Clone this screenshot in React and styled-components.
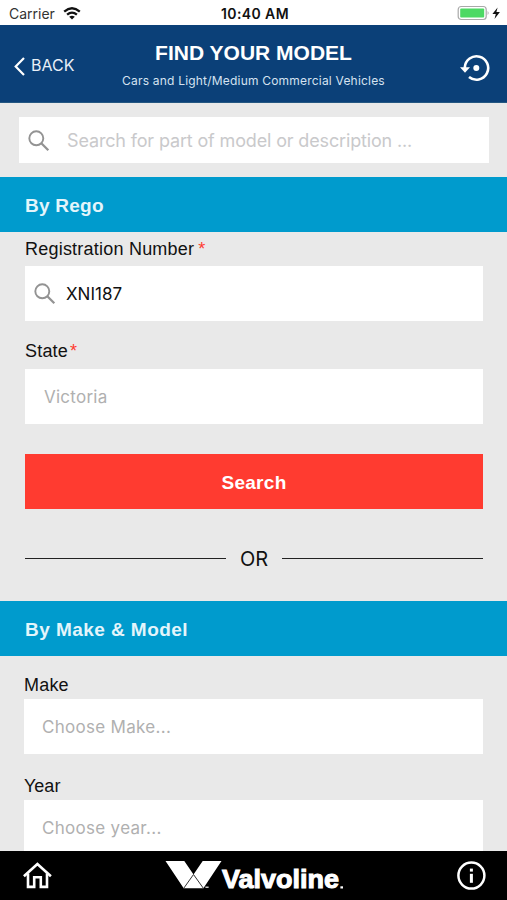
import React from "react";
import styled, { createGlobalStyle } from "styled-components";

const Global = createGlobalStyle`
  * { box-sizing: border-box; }
  body { margin: 0; background: #e9e9e9; }
`;
const Screen = styled.div`
  width: 507px; height: 900px; display: flex; flex-direction: column; overflow: hidden;
  background: #e9e9e9; font-family: "Liberation Sans", Arial, sans-serif; color: #111;
`;
const Label = styled.span`
  font-family: ${(p) => (p.$ui ? 'Inter, sans-serif' : '"Liberation Sans", Arial, sans-serif')};
  font-size: ${(p) => p.$size}px;
  font-weight: ${(p) => p.$weight || 400};
  letter-spacing: ${(p) => p.$track || 0}px;
  color: ${(p) => p.$color || "#111"};
  white-space: pre; line-height: 1.2;
`;
const StatusBar = styled.div`
  height: 25px; flex: none; background: #fff; padding: 3px 6px 0 9px;
  display: grid; grid-template-columns: 1fr auto 1fr; align-items: center;
`;
const StatusGroup = styled.div`
  display: flex; align-items: center; gap: ${(p) => p.$gap}px;
  justify-content: ${(p) => (p.$end ? "flex-end" : "flex-start")};
  padding-bottom: ${(p) => (p.$end ? 2 : 0)}px;
`;
const Header = styled.header`
  height: 78px; flex: none; background: #0b4078; border-bottom: 1px solid #245781;
  display: grid; grid-template-columns: 92px 1fr 92px; align-items: center;
`;
const Back = styled.button`
  display: flex; align-items: center; gap: 6px; border: 0; background: none; padding: 5px 0 0 14px;
`;
const Titles = styled.div`
  display: flex; flex-direction: column; align-items: center; gap: 9px; padding-top: 1px;
`;
const HistoryButton = styled.button`
  border: 0; background: none; padding: 9px 17px 0 0; display: flex; justify-content: flex-end;
`;
const SearchArea = styled.div`
  height: 74px; flex: none; padding: 14px 18px 0 19px;
`;
const Field = styled.div`
  height: ${(p) => p.$height || 55}px; background: #fff; display: flex; align-items: center;
  gap: ${(p) => p.$gap || 0}px; padding: 1px 0 0 ${(p) => p.$inset}px;
`;
const Band = styled.h2`
  margin: 0; height: 55px; flex: none; background: #009bcd; padding: 3px 0 0 25px;
  display: flex; align-items: center;
`;
const RegoForm = styled.section`
  height: 369px; flex: none; padding: 0 24px 0 25px; display: flex; flex-direction: column;
`;
const FieldLabel = styled.label`
  height: ${(p) => p.$height}px; display: flex; align-items: flex-start; padding-top: ${(p) => p.$top}px;
  gap: ${(p) => p.$gap || 0}px;
`;
const SearchButton = styled.button`
  margin: 30px 0 0; height: 55px; border: 0; background: #ff3b30; padding: 3px 0 0;
`;
const Divider = styled.div`
  height: 60px; margin-top: 20px; display: grid; grid-template-columns: 201px 56px 201px; align-items: center; justify-items: center;
`;
const Rule = styled.div`
  width: 100%; height: 1px; background: #222; margin-top: -1px;
`;
const ModelForm = styled.section`
  flex: 1; min-height: 0; overflow: hidden; padding: 0 24px 0 24px;
`;
const Footer = styled.footer`
  height: 49px; flex: none; background: #000; padding: 1px 20px 0 22px;
  display: flex; align-items: center; justify-content: space-between;
`;

const SearchIcon = () => (
  <svg width="22" height="22" viewBox="0 0 22 22" fill="none" stroke="#939393" strokeWidth="1.9">
    <circle cx="8.3" cy="8.3" r="7" />
    <path d="M13.3 13.3L20.3 20.2" strokeWidth="2.3" />
  </svg>
);
const Wifi = () => (
  <svg width="18" height="13" viewBox="0 0 18 13" fill="none" stroke="#111" strokeWidth="2.3">
    <path d="M1.2 4.6Q9-2.1 16.8 4.6" />
    <path d="M4.1 7.7Q9 3.5 13.9 7.7" />
    <path d="M9 12.6L6.2 9.8Q9 7.6 11.8 9.8Z" fill="#111" stroke="none" />
  </svg>
);
const Battery = () => (
  <svg width="44" height="16" viewBox="0 0 44 16">
    <rect x="1.2" y="1.5" width="28" height="13" rx="3" fill="#fff" stroke="#a9a9a9" strokeWidth="1.2" />
    <rect x="3.2" y="3.4" width="24" height="9.2" rx="1" fill="#4cd964" />
    <path d="M30.6 6Q32.6 8 30.6 10Z" fill="#a9a9a9" />
    <path d="M40.6 2.5L35.4 9H38.8L37.5 14L42.9 7H39.4Z" fill="#111" />
  </svg>
);
const History = () => (
  <svg width="30" height="28" viewBox="0 0 30 28" fill="none" stroke="#fff" strokeWidth="2.6">
    <path d="M4.8 15V13.4A11.7 11.7 0 1 1 9 23" />
    <path d="M0 13.3H10L5 18.8Z" fill="#fff" stroke="none" />
    <circle cx="16.3" cy="14" r="3" fill="#fff" stroke="none" />
  </svg>
);
const Home = () => (
  <svg width="30" height="28" viewBox="0 0 30 28" fill="none" stroke="#fff" strokeWidth="2.6">
    <path d="M1.9 14.2L15.4 2L28.9 14.2" />
    <path d="M6 11.5V24.9H12.2V15.2H18.8V24.9H25V11.5" />
  </svg>
);
const Info = () => (
  <svg width="30" height="30" viewBox="0 0 30 30">
    <circle cx="14.4" cy="14.6" r="13" fill="none" stroke="#fff" strokeWidth="2.5" />
    <rect x="12.9" y="7.6" width="3" height="3" fill="#fff" />
    <rect x="12.9" y="12.8" width="3" height="9" fill="#fff" />
  </svg>
);
const Brand = () => (
  <svg width="182" height="34" viewBox="0 0 182 34">
    <path d="M1.5 2H20.3L29.5 15.5L38.7 2H57.5L39.4 29.3H19.7Z" fill="#fff" />
    <path d="M19.7 29.3L29.5 15.5L39.4 29.3" fill="none" stroke="#333" strokeWidth="1" />
    <path d="M41.4 28.2H44.6" stroke="#fff" strokeWidth="1.2" />
    <text x="58" y="29.3" textLength="117" lengthAdjust="spacingAndGlyphs" fontFamily="Liberation Sans, Arial, sans-serif"
      fontWeight="700" fontSize="25" fill="#fff" stroke="#fff" strokeWidth="1">Valvoline</text>
    <rect x="176.4" y="27.3" width="2.6" height="2.2" fill="#fff" />
  </svg>
);

export default function App() {
  return (
    <Screen>
      <Global />
      <StatusBar>
        <StatusGroup $gap={8}>
          <Label $ui $size={14} $color="#333">Carrier</Label>
          <Wifi />
        </StatusGroup>
        <Label $ui $size={14} $weight={600} $track={0.4}>10:40 AM</Label>
        <StatusGroup $end>
          <Battery />
        </StatusGroup>
      </StatusBar>
      <Header>
        <Back>
          <svg width="11" height="19" viewBox="0 0 11 19" fill="none" stroke="#fff" strokeWidth="2.2">
            <path d="M10 1L1.7 9.5L10 18" />
          </svg>
          <Label $ui $size={16} $color="#e8eff7">BACK</Label>
        </Back>
        <Titles>
          <Label $size={21} $weight={700} $color="#fff">FIND YOUR MODEL</Label>
          <Label $ui $size={12} $track={0.2} $color="#d5e2f0">Cars and Light/Medium Commercial Vehicles</Label>
        </Titles>
        <HistoryButton aria-label="History"><History /></HistoryButton>
      </Header>
      <SearchArea>
        <Field $height={46} $inset={9} $gap={17}>
          <SearchIcon />
          <Label $ui $size={18} $track={-0.15} $color="#c9c9cb">Search for part of model or description ...</Label>
        </Field>
      </SearchArea>
      <Band><Label $size={19} $weight={700} $track={0.25} $color="#e3f5fb">By Rego</Label></Band>
      <RegoForm>
        <FieldLabel $height={34} $top={7} $gap={4}>
          <Label $size={18} $track={0.22}>Registration Number</Label>
          <Label $size={18} $color="#ff3b30">*</Label>
        </FieldLabel>
        <Field $inset={9} $gap={10}>
          <SearchIcon />
          <Label $ui $size={17}>XNI187</Label>
        </Field>
        <FieldLabel $height={48} $top={20} $gap={2}>
          <Label $size={18} $track={0.2}>State</Label>
          <Label $size={18} $color="#ff3b30">*</Label>
        </FieldLabel>
        <Field $inset={19}><Label $ui $size={17} $track={0.25} $color="#b0b0b0">Victoria</Label></Field>
        <SearchButton><Label $size={19} $weight={700} $track={0.3} $color="#fff">Search</Label></SearchButton>
        <Divider><Rule /><Label $ui $size={20}>OR</Label><Rule /></Divider>
      </RegoForm>
      <Band><Label $size={19} $weight={700} $track={0.45} $color="#e3f5fb">By Make &amp; Model</Label></Band>
      <ModelForm>
        <FieldLabel $height={43} $top={19}><Label $size={18} $track={0.2}>Make</Label></FieldLabel>
        <Field $inset={18}><Label $ui $size={17} $track={0.3} $color="#b0b0b0">Choose Make...</Label></Field>
        <FieldLabel $height={46} $top={22}><Label $size={18}>Year</Label></FieldLabel>
        <Field $inset={18}><Label $ui $size={17} $track={0.3} $color="#b0b0b0">Choose year...</Label></Field>
      </ModelForm>
      <Footer>
        <Home />
        <Brand />
        <Info />
      </Footer>
    </Screen>
  );
}
